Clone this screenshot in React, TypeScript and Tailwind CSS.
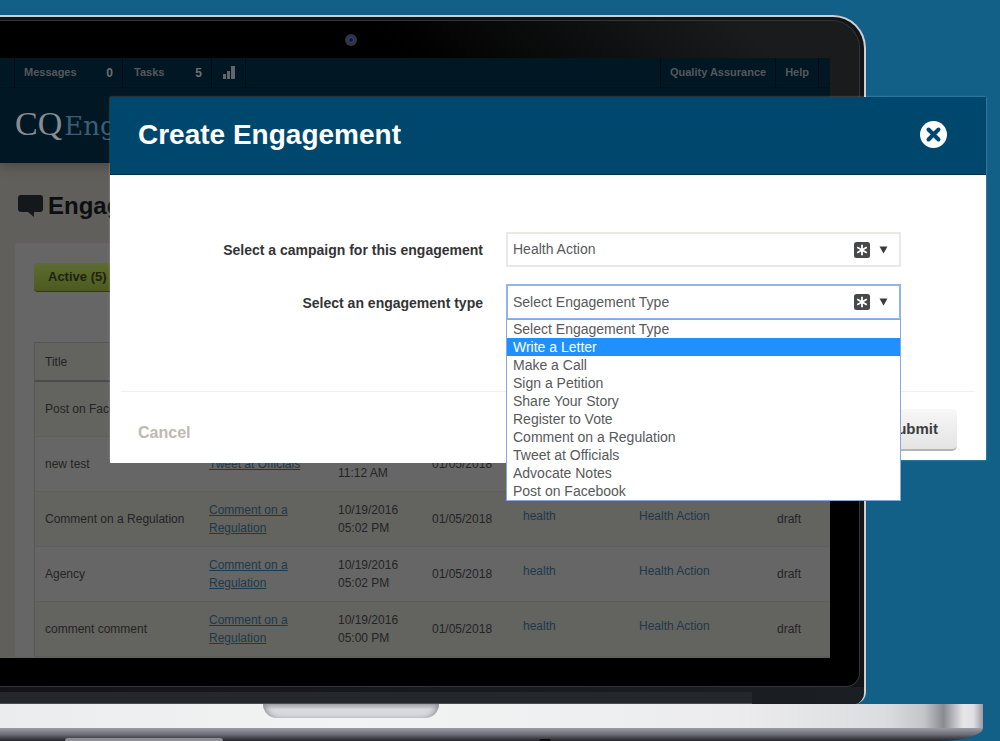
import { useState } from 'react';

const engagementTypes = [
  'Select Engagement Type',
  'Write a Letter',
  'Make a Call',
  'Sign a Petition',
  'Share Your Story',
  'Register to Vote',
  'Comment on a Regulation',
  'Tweet at Officials',
  'Advocate Notes',
  'Post on Facebook',
];

const columns = ['Title', '', '', '', '', '', ''];

const rows = [
  { title: 'Post on Facebook', type: '', created: '', expires: '', tag: '', campaign: '', status: '' },
  { title: 'new test', type: 'Tweet at Officials', created: '10/26/2016 11:12 AM', expires: '01/05/2018', tag: '', campaign: '', status: '' },
  { title: 'Comment on a Regulation', type: 'Comment on a Regulation', created: '10/19/2016 05:02 PM', expires: '01/05/2018', tag: 'health', campaign: 'Health Action', status: 'draft' },
  { title: 'Agency', type: 'Comment on a Regulation', created: '10/19/2016 05:02 PM', expires: '01/05/2018', tag: 'health', campaign: 'Health Action', status: 'draft' },
  { title: 'comment comment', type: 'Comment on a Regulation', created: '10/19/2016 05:00 PM', expires: '01/05/2018', tag: 'health', campaign: 'Health Action', status: 'draft' },
];

function FieldIcons() {
  return (
    <span className="absolute inset-y-0 right-[13px] flex items-center gap-[9px] pointer-events-none">
      <svg width="16" height="16" viewBox="0 0 16 16">
        <rect width="16" height="16" rx="2.5" fill="#47484a" />
        <path d="M8 2.8v10.4M3.2 5.3l9.6 5.4M12.8 5.3l-9.6 5.4" stroke="#fff" strokeWidth="1.8" />
      </svg>
      <svg width="9" height="8" viewBox="0 0 9 8">
        <path d="M0.5 0.5h8L4.5 7.5z" fill="#3a3b3d" />
      </svg>
    </span>
  );
}

function TopNav() {
  return (
    <nav className="flex h-[30px] justify-between border-b border-[#00101c] pl-[14px] pr-[11px] text-[11px] font-bold text-[#55585c]">
      <div className="flex">
        <a href="#messages" className="flex w-[109px] items-center justify-between border-x border-[#000c16] px-[9px]">
          Messages <span className="text-[12px] text-[#6d6f71]">0</span>
        </a>
        <a href="#tasks" className="flex w-[89px] items-center justify-between border-r border-[#000c16] pl-[11px] pr-[9px]">
          Tasks <span className="text-[12px] text-[#6d6f71]">5</span>
        </a>
        <a href="#reports" aria-label="Reports" className="flex w-[34px] items-center border-r border-[#000c16] pl-[11px]">
          <svg width="12" height="13" viewBox="0 0 12 13" fill="#62666a">
            <rect x="0" y="8" width="3" height="5" />
            <rect x="4" y="5" width="3" height="8" />
            <rect x="8" y="0" width="4" height="13" />
          </svg>
        </a>
      </div>
      <div className="flex">
        <a href="#qa" className="flex items-center border-x border-[#000c16] px-[9px]">Quality Assurance</a>
        <a href="#help" className="flex items-center border-r border-[#000c16] px-[9px]">Help</a>
      </div>
    </nav>
  );
}

function Dashboard() {
  return (
    <div className="mr-[29px] h-[600px] overflow-hidden bg-[#605f5b] text-[#242424]">
      <header className="h-[105px] bg-[#011724] shadow-[0_3px_12px_rgba(0,0,0,0.25)]">
        <TopNav />
        <div className="flex items-baseline gap-[2px] pl-[15px] pt-[4px]">
          <span className="font-['Liberation_Serif',serif] text-[34px] leading-[64px] text-[#858d93]">CQ</span>
          <span className="font-['DejaVu_Serif',serif] text-[26px] leading-[64px] text-[#3c5d75]">Eng</span>
        </div>
      </header>

      <div className="flex h-[80px] items-center gap-[5px] pl-[18px] pt-[6px]">
        <svg width="25" height="22" viewBox="0 0 25 22" className="shrink-0">
          <path d="M3 0h19a3 3 0 0 1 3 3v11a3 3 0 0 1-3 3h-6v5l-6-5H3a3 3 0 0 1-3-3V3a3 3 0 0 1 3-3z" fill="#15181a" />
        </svg>
        <h1 className="text-[24px] font-bold text-[#0c0f10]">Engagements</h1>
      </div>

      <section className="ml-[15px] rounded-tl-[4px] bg-[#666666] pl-[19px] pt-[20px]">
        <button className="h-[29px] rounded-[4px] border-b border-[#30381a] bg-gradient-to-b from-[#5f6c30] to-[#4c5a20] px-[14px] text-[13px] font-bold text-[#1e230e]">
          Active (5)
        </button>
        <table className="mt-[50px] w-full table-fixed border-separate border-spacing-0 border-l border-[#575757] text-left text-[12px] leading-[18px]">
          <colgroup>
            <col className="w-[164px]" />
            <col className="w-[129px]" />
            <col className="w-[94px]" />
            <col className="w-[91px]" />
            <col className="w-[116px]" />
            <col className="w-[138px]" />
            <col className="w-[64px]" />
          </colgroup>
          <thead>
            <tr className="bg-[#636360]">
              {columns.map((name, i) => (
                <th key={i} className="h-[40px] border-t border-b-2 border-t-[#575757] border-b-[#4b4b4b] pl-[10px] font-normal">
                  {name}
                </th>
              ))}
            </tr>
          </thead>
          <tbody>
            {rows.map((row) => (
              <tr key={row.title} className="odd:bg-[#636360] [&>td]:h-[55px] [&>td]:border-b [&>td]:border-[#5d5d5a] [&>td]:pl-[10px]">
                <td>{row.title}</td>
                <td>{row.type && <a href="#type" className="text-[#20384a] underline">{row.type}</a>}</td>
                <td>{row.created}</td>
                <td>{row.expires}</td>
                <td className="pb-[6px]">{row.tag && <a href="#tag" className="text-[#20384a]">{row.tag}</a>}</td>
                <td className="pb-[6px]">{row.campaign && <a href="#campaign" className="text-[#20384a]">{row.campaign}</a>}</td>
                <td>{row.status}</td>
              </tr>
            ))}
          </tbody>
        </table>
      </section>
    </div>
  );
}

function Laptop() {
  return (
    <div className="pt-[15px]">
      <div className="mr-[134px] overflow-hidden rounded-tr-[33px] rounded-br-[12px] border-t-2 border-r-2 border-[#cfcfd3] bg-[#131417] pt-[3px]">
        <div className="mr-[4px] rounded-tr-[28px] rounded-br-[14px] border-y border-r border-[#333437] bg-[linear-gradient(45deg,#000_68%,#1a1b1d_92%)] pb-[28px]">
          <div className="flex h-[37px] items-center pl-[345px]">
            <span className="flex size-[12px] items-center justify-center rounded-full bg-[#33343c]">
              <span className="size-[6px] rounded-full border border-[#3d418f] bg-[#15163c]"></span>
            </span>
          </div>
          <Dashboard />
        </div>
        <div className="h-[17px] bg-gradient-to-r from-transparent to-[#1b1f24] pt-[5px]">
          <div className="mr-[112px] h-[12px] border-b border-[#4b4d52] bg-[#24282d]"></div>
        </div>
      </div>

      {/* Keyboard base */}
      <div className="mr-[17px]">
        <div className="flex h-[24px] items-start bg-[linear-gradient(90deg,#ebecee,#f2f4f3_35%,#ececee_75%,#dcdde0_90%,#c4c5c9_94%,#8a8b90_96%,#e6e6e9_98%,#e0e0e4_99%,#9a9ba2)] pl-[263px]">
          <div className="h-[14px] w-[176px] rounded-b-[14px] bg-gradient-to-b from-[#a9aab1] to-[#d8d9dd] to-40% shadow-[inset_5px_0_6px_-3px_#8d8e95,inset_-5px_0_6px_-3px_#8d8e95]"></div>
        </div>
        <div className="flex h-[13px] items-end rounded-br-[45px_13px] bg-gradient-to-b from-[#9b9ca5] via-[#6c6d75] to-[#26262a] pl-[65px]">
          <div className="h-[3px] w-[158px] rounded-t-[4px] bg-[#8f9096]"></div>
          <div className="ml-[316px] h-[2px] w-[12px] rounded-t-full bg-[#0c0c0e]"></div>
        </div>
      </div>
    </div>
  );
}

function CreateEngagementModal({ onClose }: { onClose: () => void }) {
  const [type, setType] = useState(engagementTypes[0]);
  const [highlighted, setHighlighted] = useState('Write a Letter');
  const [listOpen, setListOpen] = useState(true);

  return (
    <div role="dialog" aria-labelledby="modal-title" className="absolute left-[110px] right-[14px] top-[97px] bg-white shadow-[0_0_2px_rgba(255,255,255,0.4)]">
      <div className="flex h-[78px] items-center justify-between border-b border-[#002d50] bg-[#00476d] pb-[3px] pl-[28px] pr-[39px]">
        <h2 id="modal-title" className="pt-[2px] text-[28px] font-bold text-white">Create Engagement</h2>
        <button aria-label="Close" onClick={onClose}>
          <svg width="27" height="27" viewBox="0 0 27 27" className="block">
            <circle cx="13.5" cy="13.5" r="13.5" fill="#fff" />
            <path d="M8.5 8.5l10 10M18.5 8.5l-10 10" stroke="#00476d" strokeWidth="4" strokeLinecap="round" />
          </svg>
        </button>
      </div>

      <form onSubmit={(e) => e.preventDefault()}>
        <div className="grid grid-cols-[373px_1fr] items-center gap-x-[23px] gap-y-[17px] pb-[71px] pr-[85px] pt-[57px] text-[14px] text-[#58595b]">
          <label htmlFor="campaign" className="pt-[2px] text-right font-bold text-[#333436]">Select a campaign for this engagement</label>
          <div className="relative">
            <select id="campaign" className="block h-[35px] w-full appearance-none border-2 border-[#ebe9e6] bg-white px-[5px]">
              <option>Health Action</option>
            </select>
            <FieldIcons />
          </div>

          <label htmlFor="type" className="pt-[2px] text-right font-bold text-[#333436]">Select an engagement type</label>
          <div className="relative">
            <select
              id="type"
              value={type}
              onChange={(e) => setType(e.target.value)}
              className="block h-[36px] w-full appearance-none border-2 border-[#8fb5ee] bg-white px-[5px]"
            >
              {engagementTypes.map((name) => (
                <option key={name}>{name}</option>
              ))}
            </select>
            <FieldIcons />
            {listOpen && (
              <ul role="listbox" aria-label="Engagement types" className="absolute inset-x-0 top-[35px] z-10 border border-[#86a8dc] bg-white">
                {engagementTypes.map((name) => (
                  <li
                    key={name}
                    role="option"
                    aria-selected={name === highlighted}
                    onMouseEnter={() => setHighlighted(name)}
                    onClick={() => { setType(name); setListOpen(false); }}
                    className={`px-[6px] leading-[18px] ${name === highlighted ? 'bg-[#1e90ff] text-white' : ''}`}
                  >
                    {name}
                  </li>
                ))}
              </ul>
            )}
          </div>
        </div>

        <div className="mx-[11px] flex h-[69px] items-center justify-between border-t border-[#eef1f1] pl-[17px] pr-[18px] pt-[8px]">
          <button type="button" onClick={onClose} className="pt-[6px] text-[16px] font-bold text-[#bfb9b3]">Cancel</button>
          <button type="submit" className="h-[42px] rounded-[5px] border-b-2 border-[#b4b4b4] bg-gradient-to-b from-[#f7f7f7] to-[#e4e4e4] px-[19px] text-[15px] font-bold text-[#3c3d3f]">
            Submit
          </button>
        </div>
      </form>
      <div className="absolute left-0 top-full h-[3px] w-1/2 bg-white"></div>
    </div>
  );
}

export default function App() {
  const [open, setOpen] = useState(true);

  return (
    <main className="relative min-h-screen overflow-hidden bg-[#125f87] font-['Liberation_Sans',Arial,sans-serif]">
      <Laptop />
      {open && <CreateEngagementModal onClose={() => setOpen(false)} />}
    </main>
  );
}
